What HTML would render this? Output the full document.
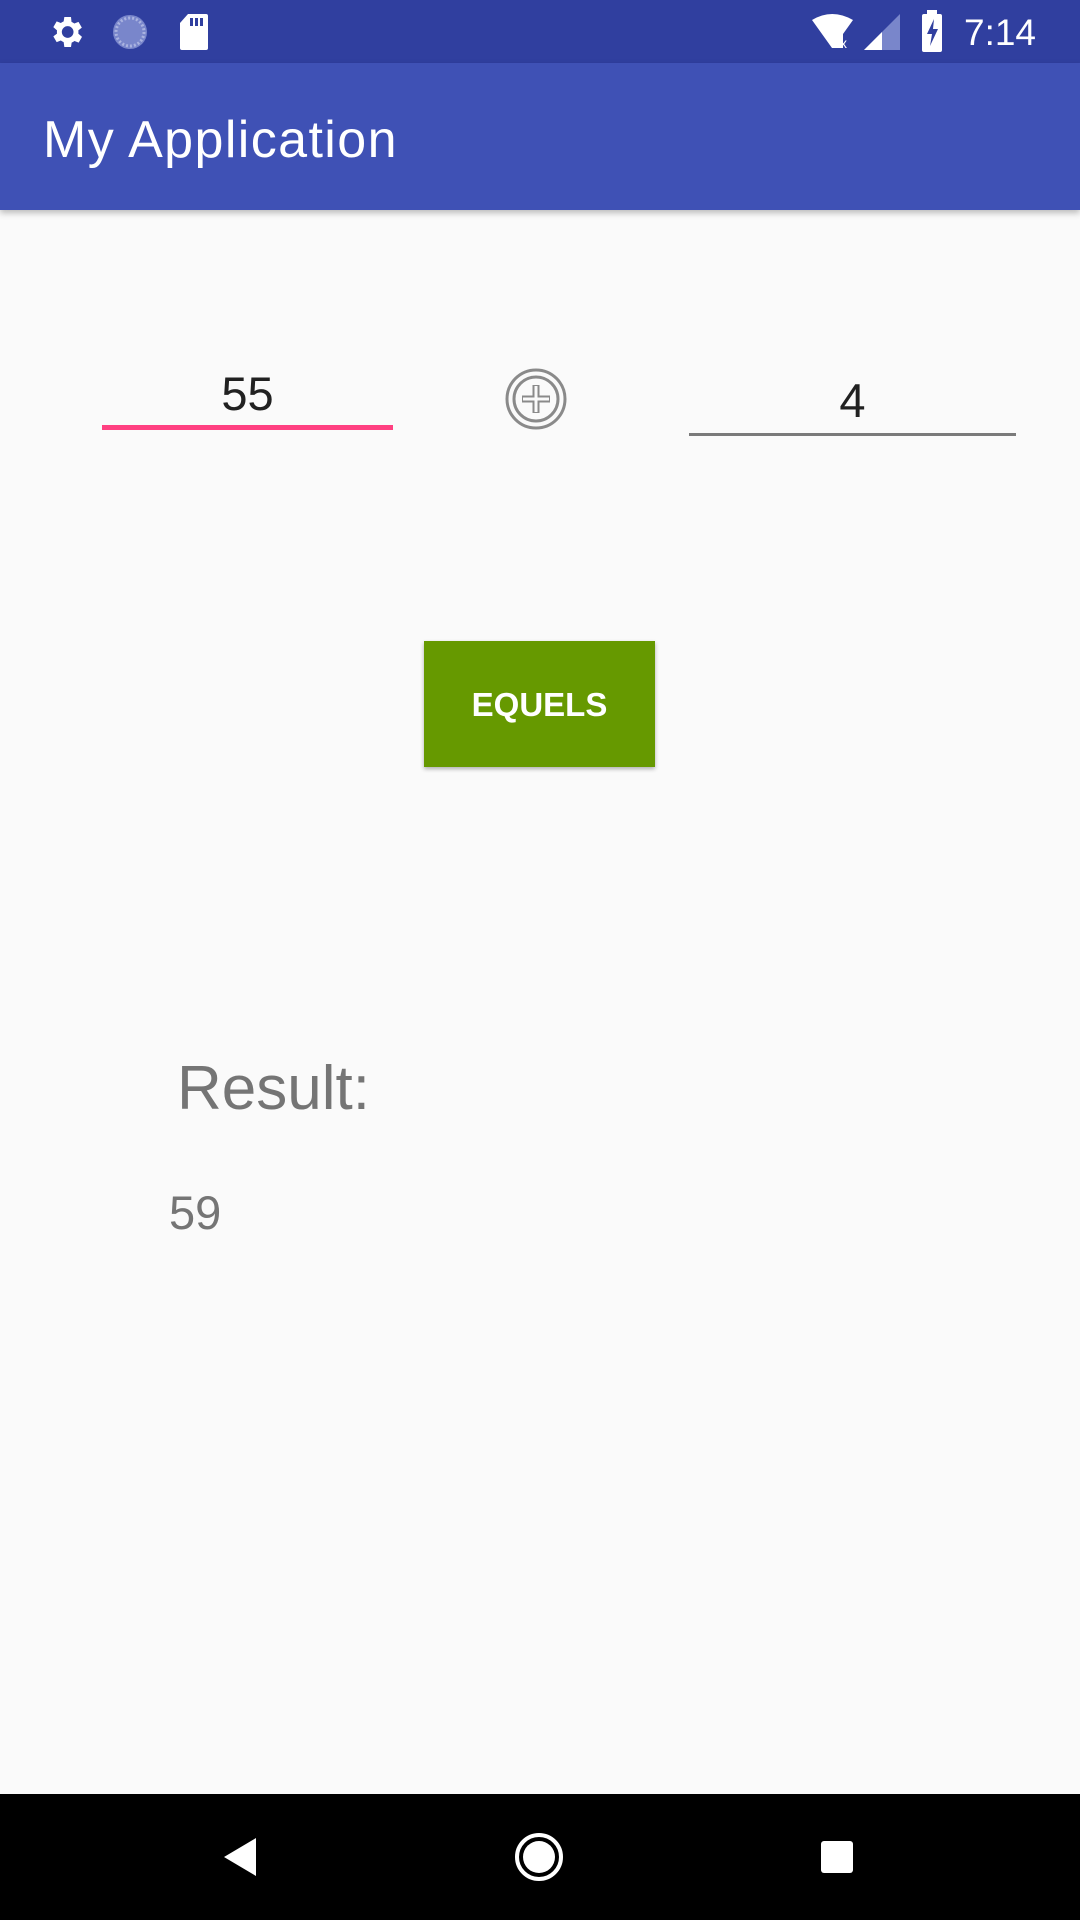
<!DOCTYPE html>
<html><head><meta charset="utf-8"><style>
*{margin:0;padding:0;box-sizing:border-box}
body{width:1080px;height:1920px;background:#fafafa;position:relative;overflow:hidden;font-family:"Liberation Sans",sans-serif}
.a{position:absolute}
.t{position:absolute;line-height:1;white-space:nowrap}
</style></head><body>
<div class="a" style="left:0;top:0;width:1080px;height:63px;background:#303f9f"></div>
<div class="a" style="left:0;top:63px;width:1080px;height:147px;background:#3f51b5;box-shadow:0 3px 6px rgba(0,0,0,0.25)"></div>
<svg class="a" style="left:46px;top:12px" width="40" height="40" viewBox="0 0 24 24"><path fill="#fff" d="M19.4 13a7.5 7.5 0 000-2l2.1-1.6-2-3.5-2.5 1a7 7 0 00-1.7-1L15 3h-4l-.4 2.6a7 7 0 00-1.7 1l-2.5-1-2 3.5L6.6 11a7.5 7.5 0 000 2l-2.2 1.6 2 3.5 2.5-1a7 7 0 001.7 1L11 21h4l.4-2.6a7 7 0 001.7-1l2.5 1 2-3.5zM13 15.5a3.5 3.5 0 110-7 3.5 3.5 0 010 7z"/></svg>
<svg class="a" style="left:110px;top:12px" width="40" height="40" viewBox="0 0 40 40"><circle cx="20" cy="20" r="17" fill="#7986cb"/><circle cx="20" cy="20" r="14" fill="none" stroke="#aab3e0" stroke-width="3" stroke-dasharray="2 2"/></svg>
<svg class="a" style="left:178px;top:12px" width="32" height="40" viewBox="0 0 32 40"><path fill="#fff" d="M10 2h18a2 2 0 012 2v32a2 2 0 01-2 2H4a2 2 0 01-2-2V11z"/><rect x="12" y="6" width="3" height="8" fill="#303f9f"/><rect x="17" y="6" width="3" height="8" fill="#303f9f"/><rect x="22" y="6" width="3" height="8" fill="#303f9f"/></svg>
<svg class="a" style="left:810px;top:12px" width="50" height="40" viewBox="0 0 50 40"><path fill="#fff" d="M2 8Q22-4 43 8L33 22V36H26L22 36Z"/><text x="30" y="36" font-size="14" fill="#fff" font-family="Liberation Sans">x</text></svg>
<svg class="a" style="left:864px;top:14px" width="36" height="36" viewBox="0 0 36 36"><path fill="#7986cb" d="M36 0V36H0Z"/><path fill="#fff" d="M18 18V36H0Z"/></svg>
<svg class="a" style="left:920px;top:10px" width="24" height="42" viewBox="0 0 24 42"><rect x="7" y="0" width="10" height="4" fill="#fff"/><rect x="2" y="4" width="20" height="38" rx="2" fill="#fff"/><path fill="#303f9f" d="M14 9L7 24h5l-2 12 8-17h-5z"/></svg>
<div class="t" style="left:964px;top:14px;font-size:37px;color:#fff">7:14</div>
<div class="t" style="left:43px;top:114px;font-size:52px;color:#fff;letter-spacing:1.4px">My Application</div>
<div class="t" style="left:102px;width:291px;top:370px;text-align:center;font-size:47px;color:#212121">55</div>
<div class="a" style="left:102px;top:425px;width:291px;height:5px;background:#ff4081"></div>
<svg class="a" style="left:504px;top:367px" width="64" height="64" viewBox="0 0 64 64"><circle cx="32" cy="32" r="29" fill="none" stroke="#8a8a8a" stroke-width="3"/><circle cx="32" cy="32" r="22" fill="none" stroke="#8a8a8a" stroke-width="3"/><path d="M32 18V46M18 32H46" stroke="#8a8a8a" stroke-width="7"/><path d="M32 19V45M19 32H45" stroke="#fafafa" stroke-width="3"/></svg>
<div class="t" style="left:689px;width:327px;top:377px;text-align:center;font-size:47px;color:#212121">4</div>
<div class="a" style="left:689px;top:433px;width:327px;height:3px;background:#7a7a7a"></div>
<div class="a" style="left:424px;top:641px;width:231px;height:126px;background:#669900;box-shadow:0 2px 4px rgba(0,0,0,0.3)"></div>
<div class="t" style="left:424px;width:231px;top:688px;text-align:center;font-size:33px;font-weight:bold;color:#fff">EQUELS</div>
<div class="t" style="left:177px;top:1058px;font-size:62px;color:#757575">Result:</div>
<div class="t" style="left:169px;top:1189px;font-size:47px;color:#757575">59</div>
<div class="a" style="left:0;top:1794px;width:1080px;height:126px;background:#000"></div>
<svg class="a" style="left:220px;top:1836px" width="40" height="42" viewBox="0 0 40 42"><path fill="#fff" d="M36 2V40L4 21Z"/></svg>
<svg class="a" style="left:513px;top:1831px" width="52" height="52" viewBox="0 0 52 52"><circle cx="26" cy="26" r="22" fill="none" stroke="#fff" stroke-width="4"/><circle cx="26" cy="26" r="16" fill="#fff"/></svg>
<div class="a" style="left:821px;top:1841px;width:32px;height:32px;background:#fff;border-radius:3px"></div>
</body></html>
